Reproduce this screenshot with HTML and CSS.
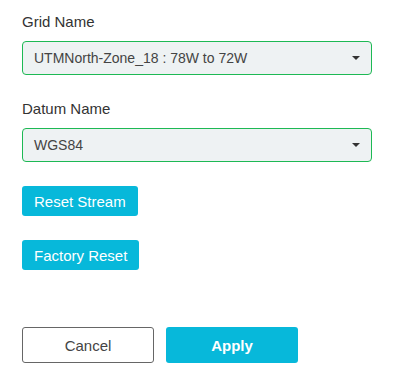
FILE: index.html
```html
<!DOCTYPE html>
<html lang="en">

<head>
    <meta charset="UTF-8">
    <meta name="viewport" content="width=device-width, initial-scale=1.0">
    <title>Stream Settings</title>
    <link rel="stylesheet" href="styles.css">
</head>

<body>
    <div class="panel">
        <div class="field">
            <label class="field-label">Grid Name</label>
            <div class="select">
                <span>UTMNorth-Zone_18 : 78W to 72W</span>
                <span class="caret"></span>
            </div>
        </div>

        <div class="field field-last">
            <label class="field-label">Datum Name</label>
            <div class="select">
                <span>WGS84</span>
                <span class="caret"></span>
            </div>
        </div>

        <button class="btn btn-small">Reset Stream</button>
        <button class="btn btn-small">Factory Reset</button>

        <div class="actions">
            <button class="btn-outline">Cancel</button>
            <button class="btn btn-apply">Apply</button>
        </div>
    </div>
</body>

</html>
```

FILE: styles.css
```css
body {
    margin: 0;
    font-family: "Liberation Sans", Arial, sans-serif;
    color: #333;
    background-color: #fff;
}

.panel {
    padding: 13px 0 0 22px;
    width: 350px;
}

.field {
    margin-bottom: 25px;
}

.field-last {
    margin-bottom: 24px;
}

.field-label {
    display: block;
    font-size: 15px;
    line-height: 17px;
    margin-bottom: 11px;
}

.select {
    display: flex;
    align-items: center;
    justify-content: space-between;
    height: 34px;
    box-sizing: border-box;
    padding: 0 11px 0 11px;
    background-color: #eef2f3;
    border: 1px solid #1db954;
    border-radius: 4px;
    font-size: 14px;
    color: #444;
}

.caret {
    width: 0;
    height: 0;
    border-left: 4px solid transparent;
    border-right: 4px solid transparent;
    border-top: 4px solid #333;
}

.btn {
    display: block;
    padding: 0 12px;
    height: 30px;
    border: none;
    border-radius: 3px;
    background-color: #07b8da;
    color: #fff;
    font-family: inherit;
    font-size: 15px;
    cursor: pointer;
}

.btn-small {
    margin-bottom: 24px;
}

.actions {
    display: flex;
    gap: 12px;
    margin-top: 57px;
}

.btn-outline,
.btn-apply {
    width: 132px;
    height: 36px;
    border-radius: 3px;
    font-family: inherit;
    font-size: 15px;
}

.btn-outline {
    background-color: #fff;
    border: 1px solid #666;
    color: #444;
}

.btn-apply {
    font-weight: bold;
}
```
